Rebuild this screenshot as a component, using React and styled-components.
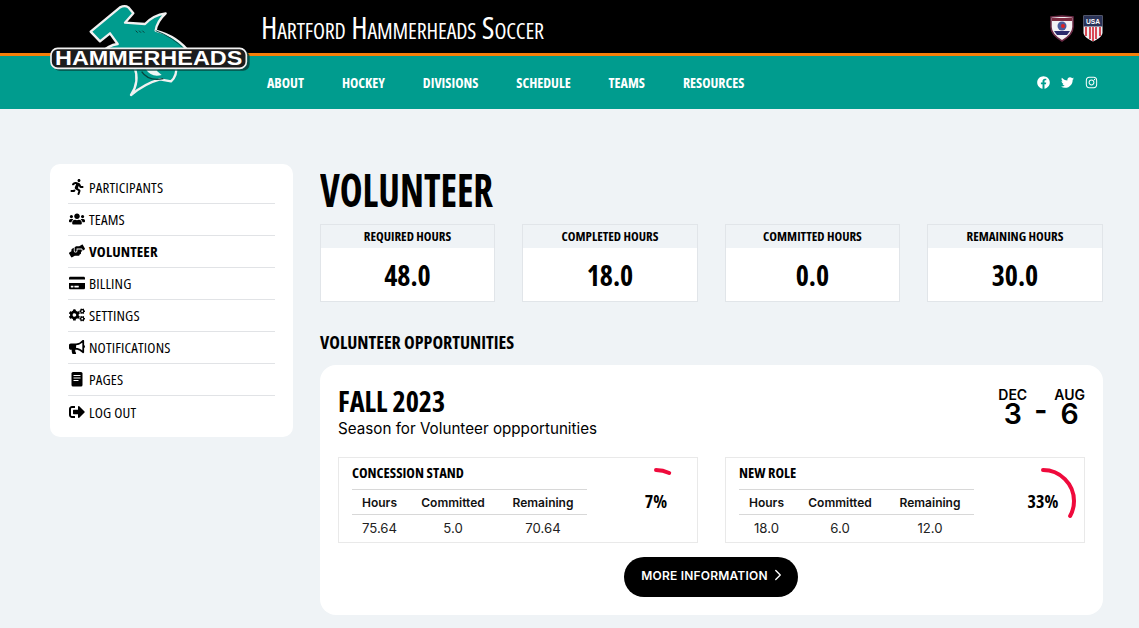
import React from 'react';
import styled, { createGlobalStyle } from 'styled-components';
import { FaRunning, FaUsers, FaHandsHelping, FaCreditCard, FaCogs, FaBullhorn, FaSignOutAlt, FaFacebook, FaTwitter, FaInstagram } from 'react-icons/fa';
import { ChevronRight } from 'lucide-react';

const Cond = `"Open Sans", Roboto, sans-serif`;
const Body = `Inter, "Liberation Sans", sans-serif`;

const Global = createGlobalStyle`
  html, body { margin: 0; padding: 0; background: #eff3f6; font-family: ${Body}; color: #000; }
  * { box-sizing: border-box; }
`;
const Page = styled.div`width: 1139px; height: 628px; overflow: hidden; position: relative;`;
const TopBar = styled.div`height: 53px; background: #000; display: flex; align-items: center; justify-content: space-between; padding: 0 36px 0 261px;`;
const Title = styled.div`color: #fff; font-family: ${Cond}; font-size: 31px; font-variant: small-caps; font-stretch: 75%; white-space: nowrap; letter-spacing: -.15px;`;
const Badges = styled.div`display: flex; gap: 9px; align-items: center; margin-top: 3px;`;
const NavBar = styled.div`height: 56px; border-top: 3px solid #f57f0a; background: #009c8e; display: flex; align-items: center; justify-content: space-between; padding: 0 41px 0 267px;`;
const NavLinks = styled.div`display: flex; gap: 38px;`;
const NavLink = styled.a`color: #fff; font-family: ${Cond}; font-weight: 700; font-size: 14px; font-stretch: 75%;`;
const Socials = styled.div`display: flex; gap: 11px; color: #fff; font-size: 13px; align-items: center;`;
const Logo = styled.svg`position: absolute; left: 45px; top: 0;`;
const Content = styled.div`display: flex; gap: 27px; padding: 55px 36px 0 50px; align-items: flex-start;`;
const Sidebar = styled.nav`width: 243px; background: #fff; border-radius: 10px; padding: 8px 18px 9px;`;
const SideItem = styled.div`height: 32px; padding-bottom: 1px; display: flex; align-items: center; gap: 4px; font-family: ${Cond}; font-size: 15px; letter-spacing: .15px; font-stretch: 75%; font-weight: ${p => p.$active ? 700 : 400}; border-bottom: ${p => p.$last ? 'none' : '1px solid #e1e3e6'};`;
const IconBox = styled.span`width: 17px; display: flex; justify-content: center; font-size: 16px;`;
const Main = styled.main`flex: 1;`;
const H1 = styled.h1`font-family: ${Cond}; font-size: 47px; line-height: 51px; margin: 0 0 9px; font-weight: 700; font-stretch: 75%; transform: scaleX(.82); transform-origin: left center; white-space: nowrap;`;
const Stats = styled.div`display: grid; grid-template-columns: repeat(4, 175.500px); gap: 27px; margin-left: -.3px;`;
const Stat = styled.div`border: 1px solid #e1e5e9; height: 78px; background: #fff;`;
const StatHead = styled.div`height: 23px; padding-bottom: 2px; background: #eff3f6; font-family: ${Cond}; font-weight: 700; font-size: 13px; font-stretch: 75%; display: flex; align-items: center; justify-content: center;`;
const StatVal = styled.div`height: 53px; font-family: ${Cond}; font-weight: 700; font-size: 28px; font-stretch: 75%; display: flex; align-items: center; justify-content: center;`;
const H2 = styled.h2`font-family: ${Cond}; font-size: 18px; line-height: 24px; margin: 28px 0 11px; font-weight: 700; font-stretch: 75%;`;
const Card = styled.section`background: #fff; border-radius: 16px; padding: 18px; height: 250px;`;
const CardHead = styled.div`display: flex; justify-content: space-between; height: 74px;`;
const Season = styled.div`font-family: ${Cond}; font-weight: 700; font-size: 28.200px; line-height: 36px; font-stretch: 75%;`;
const Sub = styled.div`font-size: 15.200px; line-height: 20px;`;
const DateRange = styled.div`display: flex; gap: 7px; align-items: flex-start; margin-top: 5px;`;
const DateCol = styled.div`display: flex; flex-direction: column; align-items: center; font-weight: 600; font-size: 14px; line-height: 14px;`;
const Big = styled.span`font-size: 28.500px; line-height: 24px; font-weight: 600;`;
const Dash = styled.span`font-size: 28px; line-height: 40px; font-weight: 700; margin-top: 2px;`;
const Roles = styled.div`display: grid; grid-template-columns: 360px 360px; gap: 27px;`;
const Role = styled.div`border: 1px solid #e9e9e9; height: 86px; padding: 0 13px; display: flex; position: relative;`;
const RoleBody = styled.div`width: 235px;`;
const RoleName = styled.div`font-family: ${Cond}; font-weight: 700; font-size: 14.500px; line-height: 30px; margin-bottom: 1px; font-stretch: 75%;`;
const Row = styled.div`display: grid; grid-template-columns: 55px 92px 88px; text-align: center; height: ${p => p.$h}px; align-items: center; border-top: 1px solid #d8d8d8; font-size: ${p => p.$head ? 12 : 13.200}px; font-weight: ${p => p.$head ? 600 : 400}; color: ${p => p.$head ? '#111' : '#222'};`;
const Gauge = styled.div`position: absolute; right: 6px; top: 8px; width: 70px; height: 70px; display: flex; align-items: center; justify-content: center; font-family: ${Cond}; font-weight: 700; font-size: 18px; font-stretch: 75%;`;
const GaugeSvg = styled.svg`position: absolute; inset: 0;`;
const BtnRow = styled.div`display: flex; justify-content: center; margin-top: 14px; padding-right: 1px;`;
const Btn = styled.button`height: 40px; width: 174px; padding: 0 0 4px; border: 0; border-radius: 20px; background: #000; color: #fff; font-family: ${Body}; font-weight: 600; font-size: 12px; letter-spacing: .2px; display: flex; align-items: center; justify-content: center; gap: 1px;`;
const BtnChevron = styled(ChevronRight)`margin-right: -6px;`;

function PagesIcon() {
  return <svg width="12" height="15" viewBox="0 0 12 15"><rect width="11" height="14.500" x=".5" rx="1.500" fill="#000" /><path d="M2.500 3.500h7M2.500 6h7M2.500 8.500h5" stroke="#fff" strokeWidth="1" /></svg>;
}
const side = [
  ['PARTICIPANTS', <FaRunning />], ['TEAMS', <FaUsers />], ['VOLUNTEER', <FaHandsHelping />, true], ['BILLING', <FaCreditCard />],
  ['SETTINGS', <FaCogs />], ['NOTIFICATIONS', <FaBullhorn />], ['PAGES', <PagesIcon />], ['LOG OUT', <FaSignOutAlt />],
];
function GaugeArc({ pct }) {
  const r = 31, c = 2 * Math.PI * r;
  return <GaugeSvg viewBox="0 0 70 70"><circle cx="35" cy="35" r={r} fill="none" stroke="#ef0a3c" strokeWidth="4" strokeLinecap="round" strokeDasharray={`${c * pct / 100} ${c}`} transform="rotate(-90 35 35)" /></GaugeSvg>;
}
function RoleCard({ name, h, co, re, pct }) {
  return <Role>
    <RoleBody>
      <RoleName>{name}</RoleName>
      <Row $head $h={25}><span>Hours</span><span>Committed</span><span>Remaining</span></Row>
      <Row $h={27}><span>{h}</span><span>{co}</span><span>{re}</span></Row>
    </RoleBody>
    <Gauge><GaugeArc pct={pct} />{pct}%</Gauge>
  </Role>;
}
function SharkLogo() {
  return <Logo width="210" height="100" viewBox="0 0 630 300">
    <path d="M137 95 L225 22 Q240 15 250 22 L265 40 L240 68 L300 72 Q325 45 362 40 Q335 65 332 92 Q400 110 435 160 L392 200 Q398 225 378 244 L345 238 Q300 250 258 285 Q285 245 268 200 L220 190 L160 165 Q190 135 218 132 L195 100 L165 124 Z" fill="#009c8e" stroke="#f1f1f1" strokeWidth="7" strokeLinejoin="round" />
    <path d="M332 92 Q385 112 420 150" fill="none" stroke="#0a4f49" strokeWidth="3" />
    <path d="M272 92l6 6M282 92l6 6M292 92l6 6" stroke="#0a3f3a" strokeWidth="3" />
    <path d="M300 205 Q320 235 350 225 L335 212 L345 205Z" fill="#eef7f6" />
    <path d="M290 215 Q310 245 355 236" fill="none" stroke="#06433d" strokeWidth="4" />
    <rect x="24" y="152" width="590" height="60" rx="20" fill="#063f39" opacity=".85" />
    <rect x="18" y="145" width="586" height="60" rx="20" fill="#1c1c1c" stroke="#f1f1f1" strokeWidth="5" />
    <text x="311" y="196" textAnchor="middle" fontFamily="Liberation Sans" fontWeight="700" fontSize="58" textLength="562" lengthAdjust="spacingAndGlyphs" fill="#fff">HAMMERHEADS</text>
  </Logo>;
}

export default function App() {
  return <Page>
    <Global />
    <TopBar>
      <Title>Hartford Hammerheads Soccer</Title>
      <Badges>
        <svg width="24" height="27" viewBox="0 0 24 27"><path d="M1 2l11-1 11 1v10c0 7-6 11-11 14C7 23 1 19 1 12z" fill="#f4f1f3" stroke="#6b2a45" strokeWidth="1.500"/><path d="M2 3h20v3H2z" fill="#7b2a3f"/><path d="M4 16h16l-3 4H7z" fill="#2b2a6b"/><circle cx="12" cy="11" r="4.500" fill="#4a5a9a"/><circle cx="13" cy="11" r="2" fill="#d22"/></svg>
        <svg width="20" height="27" viewBox="0 0 20 27"><path d="M.5.500h19v17c0 4-5 7-9.500 9C5.500 24.500.5 21.500.5 17.500z" fill="#f1f1f4"/><path d="M.5.500h19v11H.500z" fill="#2a3358"/><path d="M3 12v9M7 12v12M10 12v14M13 12v12M17 12v9" stroke="#d74a55" strokeWidth="2"/><text x="10" y="9" textAnchor="middle" fontSize="8" fontWeight="700" fill="#fff" fontFamily="Liberation Sans" textLength="14" lengthAdjust="spacingAndGlyphs">USA</text></svg>
      </Badges>
    </TopBar>
    <NavBar>
      <NavLinks>{['ABOUT','HOCKEY','DIVISIONS','SCHEDULE','TEAMS','RESOURCES'].map(n => <NavLink key={n}>{n}</NavLink>)}</NavLinks>
      <Socials><FaFacebook /><FaTwitter /><FaInstagram /></Socials>
    </NavBar>
    <SharkLogo />
    <Content>
      <Sidebar>
        {side.map(([t, ic, a], i) => <SideItem key={t} $active={a} $last={i === side.length - 1}><IconBox>{ic}</IconBox>{t}</SideItem>)}
      </Sidebar>
      <Main>
        <H1>VOLUNTEER</H1>
        <Stats>
          {[['REQUIRED HOURS','48.0'],['COMPLETED HOURS','18.0'],['COMMITTED HOURS','0.0'],['REMAINING HOURS','30.0']].map(([a,b]) => <Stat key={a}><StatHead>{a}</StatHead><StatVal>{b}</StatVal></Stat>)}
        </Stats>
        <H2>VOLUNTEER OPPORTUNITIES</H2>
        <Card>
          <CardHead>
            <div><Season>FALL 2023</Season><Sub>Season for Volunteer oppportunities</Sub></div>
            <DateRange>
              <DateCol>DEC<Big>3</Big></DateCol><Dash>-</Dash><DateCol>AUG<Big>6</Big></DateCol>
            </DateRange>
          </CardHead>
          <Roles>
            <RoleCard name="CONCESSION STAND" h="75.64" co="5.0" re="70.64" pct={7} />
            <RoleCard name="NEW ROLE" h="18.0" co="6.0" re="12.0" pct={33} />
          </Roles>
          <BtnRow><Btn>MORE INFORMATION <BtnChevron size={18} strokeWidth={1.8} /></Btn></BtnRow>
        </Card>
      </Main>
    </Content>
  </Page>;
}
